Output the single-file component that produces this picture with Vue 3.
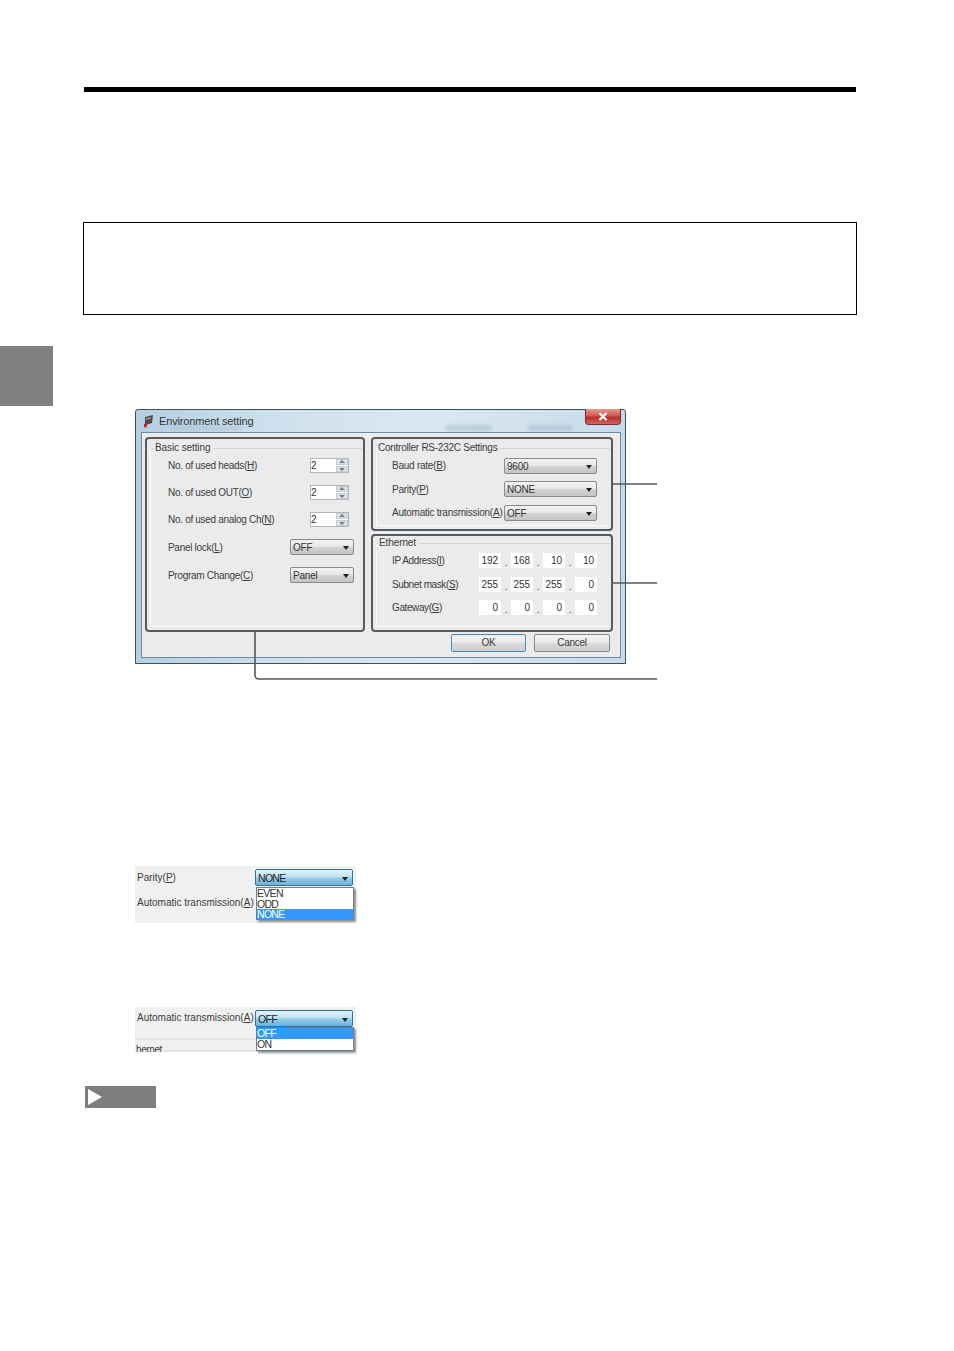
<script setup>
const basicSpins = [
  { pre: 'No. of used heads(', key: 'H', val: '2' },
  { pre: 'No. of used OUT(', key: 'O', val: '2' },
  { pre: 'No. of used analog Ch(', key: 'N', val: '2' },
];
const basicCombos = [
  { pre: 'Panel lock(', key: 'L', val: 'OFF' },
  { pre: 'Program Change(', key: 'C', val: 'Panel' },
];
const serial = [
  { pre: 'Baud rate(', key: 'B', val: '9600' },
  { pre: 'Parity(', key: 'P', val: 'NONE' },
  { pre: 'Automatic transmission(', key: 'A', val: 'OFF' },
];
const ethernet = [
  { pre: 'IP Address(', key: 'I', vals: ['192', '168', '10', '10'] },
  { pre: 'Subnet mask(', key: 'S', vals: ['255', '255', '255', '0'] },
  { pre: 'Gateway(', key: 'G', vals: ['0', '0', '0', '0'] },
];
</script>

<template>
  <div class="page">
    <div class="rule"></div>
    <div class="note"></div>
    <div class="tab"></div>

    <div class="figure">
      <div class="dialog">
        <div class="titlebar">
          <svg class="appicon" width="11" height="13" viewBox="0 0 11 13">
            <path d="M2 2 L10 0 L9 8 L2 10 Z" fill="#4a4a4a" />
            <path d="M3 3 L8 2 L8 4 L3 5 Z" fill="#8f8f8f" />
            <path d="M1 9 L5 8 L3 13 L1 12 Z" fill="#c8242c" />
          </svg>
          <span class="title">Environment setting</span>
          <i class="ghost ghost-a"></i>
          <i class="ghost ghost-b"></i>
          <i class="ghost ghost-c"></i>
          <div class="close">
            <svg width="10" height="9" viewBox="0 0 10 9">
              <path d="M1.5 1 L8.5 8 M8.5 1 L1.5 8" stroke="#fff" stroke-width="2.2" />
            </svg>
          </div>
        </div>

        <div class="client">
          <div class="panels">
            <div class="panel panel-basic">
              <div class="group">
                <div class="legend">Basic setting</div>
                <div class="spin-row" v-for="r in basicSpins" :key="r.key">
                  <span>{{ r.pre }}<u>{{ r.key }}</u>)</span>
                  <div class="spin">
                    <span class="spin-val">{{ r.val }}</span>
                    <div class="spin-btns">
                      <i class="up"></i>
                      <i class="down"></i>
                    </div>
                  </div>
                </div>
                <div class="combo-row" v-for="r in basicCombos" :key="r.key">
                  <span>{{ r.pre }}<u>{{ r.key }}</u>)</span>
                  <div class="combo combo-small">{{ r.val }}<b class="arrow"></b></div>
                </div>
              </div>
            </div>

            <div class="right-col">
              <div class="panel panel-serial">
                <div class="group">
                  <div class="legend">Controller RS-232C Settings</div>
                  <div class="serial-row" v-for="r in serial" :key="r.key">
                    <span>{{ r.pre }}<u>{{ r.key }}</u>)</span>
                    <div class="combo combo-wide">{{ r.val }}<b class="arrow"></b></div>
                  </div>
                </div>
              </div>
              <div class="panel panel-eth">
                <div class="group">
                  <div class="legend">Ethernet</div>
                  <div class="eth-row" v-for="r in ethernet" :key="r.key">
                    <span class="eth-label">{{ r.pre }}<u>{{ r.key }}</u>)</span>
                    <div class="octets">
                      <template v-for="(v, i) in r.vals" :key="i">
                        <span class="octet">{{ v }}</span>
                        <span class="dot" v-if="i < 3">.</span>
                      </template>
                    </div>
                  </div>
                </div>
              </div>
            </div>
          </div>

          <div class="buttons">
            <div class="btn btn-ok">OK</div>
            <div class="btn">Cancel</div>
          </div>
        </div>
      </div>

      <svg class="leaders" width="522" height="271" viewBox="0 0 522 271">
        <path d="M478 75 H522 M478 174 H522 M120 223 V266 Q120 270 124 270 H522" fill="none" stroke="#555a60" stroke-width="1.6" />
      </svg>
    </div>

    <div class="crop crop-parity">
      <div class="crop-row crop-row-first">
        <span>Parity(<u>P</u>)</span>
        <div class="combo-open">NONE<b class="arrow"></b></div>
      </div>
      <div class="crop-row crop-row-second">
        <span>Automatic transmission(<u>A</u>)</span>
      </div>
      <div class="droplist droplist-parity">
        <div>EVEN</div>
        <div>ODD</div>
        <div class="selected">NONE</div>
      </div>
    </div>

    <div class="crop crop-auto">
      <div class="crop-row crop-row-first">
        <span class="crop-label-up">Automatic transmission(<u>A</u>)</span>
        <div class="combo-open">OFF<b class="arrow"></b></div>
      </div>
      <div class="crop-sep"></div>
      <div class="crop-eth">
        <span>hernet</span>
        <i></i>
      </div>
      <div class="droplist droplist-auto">
        <div class="selected">OFF</div>
        <div>ON</div>
      </div>
    </div>

    <div class="note-tag">
      <svg width="14" height="16" viewBox="0 0 14 16">
        <path d="M0 0 L14 8 L0 16 Z" fill="#fff" />
      </svg>
    </div>
  </div>
</template>

<style>
html,
body {
  margin: 0;
  background: #fff;
}
</style>

<style scoped>
.page {
  position: relative;
  width: 954px;
  height: 1351px;
  overflow: hidden;
  background: #fff;
  font-family: "Liberation Sans", Arial, sans-serif;
  font-size: 10px;
  color: #3c3c3c;
}

.rule {
  margin: 87px 0 0 84px;
  width: 772px;
  height: 5px;
  background: #000;
}

.note {
  margin: 130px 0 0 83px;
  width: 774px;
  height: 93px;
  box-sizing: border-box;
  border: 1px solid #000;
}

.tab {
  margin-top: 31px;
  width: 53px;
  height: 60px;
  background: #808080;
}

.figure {
  position: relative;
  margin: 3px 0 0 135px;
  width: 522px;
  height: 271px;
}

.leaders {
  position: absolute;
  left: 0;
  top: 0;
  pointer-events: none;
}

.dialog {
  width: 491px;
  height: 255px;
  box-sizing: border-box;
  border: 1px solid #3d4f5f;
  border-radius: 3px 3px 0 0;
  background: linear-gradient(90deg, #b4cfe1 0%, #cfe1ed 30%, #dbe8f1 60%, #c6dbe9 100%);
  display: flex;
  flex-direction: column;
}

.titlebar {
  height: 22px;
  flex: none;
  display: flex;
  align-items: flex-start;
  position: relative;
}

.appicon {
  margin: 5px 0 0 7px;
}

.title {
  margin: 5px 0 0 5px;
  font-size: 11px;
  letter-spacing: -0.15px;
  color: #333;
}

/* faint blurred shapes showing through the glass frame */
.ghost {
  position: absolute;
  top: 16px;
  height: 4px;
  background: #8ea5b6;
  opacity: 0.55;
  filter: blur(2px);
}

.ghost-a {
  left: 36px;
  width: 70px;
  opacity: 0.3;
}

.ghost-b {
  left: 310px;
  width: 45px;
}

.ghost-c {
  left: 392px;
  width: 44px;
}

.close {
  position: absolute;
  right: 4px;
  top: -1px;
  width: 36px;
  height: 16px;
  box-sizing: border-box;
  border: 1px solid #7d2e2e;
  border-top: none;
  border-radius: 0 0 4px 4px;
  background: linear-gradient(#e59a8e 0%, #d4584c 45%, #b72f28 55%, #d0685e 100%);
  display: flex;
  align-items: center;
  justify-content: center;
}

.client {
  margin: 0 4px 5px 5px;
  flex: 1;
  box-sizing: border-box;
  border: 1px solid #6f8ba1;
  background: #ebebeb;
  padding: 4px 0 0 3px;
}

.panels {
  display: flex;
  gap: 6px;
}

.panel {
  box-sizing: border-box;
  border: 2px solid #555a60;
  border-radius: 4px;
  padding: 9px 1px 3px 3px;
  display: flex;
}

.panel-basic {
  width: 220px;
  height: 195px;
}

.right-col {
  display: flex;
  flex-direction: column;
  gap: 3px;
}

.panel-serial {
  width: 242px;
  height: 94px;
}

.panel-eth {
  width: 242px;
  height: 98px;
  padding-top: 7px;
}

.group {
  flex: 1;
  border-top: 1px solid #d4d4d4;
  border-left: 1px solid #fafafa;
  border-bottom: 1px solid #fafafa;
  min-width: 0;
}

.legend {
  display: table;
  margin: -7px 0 0 3px;
  padding: 0 3px 0 1px;
  height: 12px;
  line-height: 12px;
  background: #ebebeb;
  letter-spacing: -0.1px;
}

.panel-serial .legend {
  margin-left: 0;
  letter-spacing: -0.25px;
}

.panel-eth .legend {
  margin-left: 1px;
  letter-spacing: -0.1px;
}

.spin-row,
.combo-row {
  display: flex;
  align-items: center;
  justify-content: space-between;
  padding-left: 17px;
  letter-spacing: -0.3px;
}

.spin-row {
  height: 27px;
  padding-right: 13px;
}

.panel-basic .legend + .spin-row {
  margin-top: -2px;
}

.combo-row {
  height: 28px;
  padding-right: 8px;
}

.spin {
  width: 39px;
  height: 15px;
  box-sizing: border-box;
  border: 1px solid #b5b8bb;
  background: #fff;
  display: flex;
  justify-content: space-between;
  align-items: center;
  color: #333;
}

.spin-btns {
  width: 12px;
  height: 13px;
  display: flex;
  flex-direction: column;
  gap: 1px;
}

.spin-btns i {
  flex: 1;
  background: #dfe3e8;
  border: 1px solid #c7ccd2;
  position: relative;
}

.up::after,
.down::after {
  content: "";
  position: absolute;
  left: 2px;
  border-left: 3px solid transparent;
  border-right: 3px solid transparent;
}

.up::after {
  top: 0;
  border-bottom: 3px solid #6d7f96;
}

.down::after {
  top: 1px;
  border-top: 3px solid #6d7f96;
}

.combo {
  position: relative;
  flex: none;
  box-sizing: border-box;
  border: 1px solid #8a8a8a;
  border-radius: 2px;
  height: 16px;
  line-height: 15px;
  padding-left: 2px;
  background: linear-gradient(#f2f2f2 0%, #e8e8e8 45%, #d2d2d2 55%, #c4c4c4 100%);
  letter-spacing: -0.2px;
  color: #333;
}

.combo-small {
  width: 64px;
}

.combo-wide {
  width: 93px;
}

.arrow {
  position: absolute;
  right: 4px;
  top: 6px;
  border-left: 3px solid transparent;
  border-right: 3px solid transparent;
  border-top: 4px solid #222;
}

.serial-row {
  display: flex;
  align-items: center;
  justify-content: space-between;
  height: 23.5px;
  padding: 0 13px 0 15px;
  letter-spacing: -0.25px;
  white-space: nowrap;
}

.eth-row {
  display: flex;
  align-items: center;
  height: 23.5px;
  padding-left: 15px;
  letter-spacing: -0.4px;
}

.eth-label {
  width: 87px;
  flex: none;
  white-space: nowrap;
}

.octets {
  display: flex;
  align-items: center;
  letter-spacing: -0.1px;
}

.octet {
  width: 22px;
  height: 15px;
  line-height: 15px;
  background: #fff;
  text-align: right;
  padding-right: 3px;
  box-sizing: border-box;
  color: #333;
}

.dot {
  width: 10px;
  text-align: center;
  line-height: 20px;
  height: 15px;
}

.buttons {
  display: flex;
  justify-content: flex-end;
  gap: 8px;
  margin: 2px 10px 0 0;
}

.btn {
  box-sizing: border-box;
  width: 76px;
  height: 18px;
  line-height: 16px;
  text-align: center;
  border: 1px solid #8a8a8a;
  border-radius: 2px;
  background: linear-gradient(#f2f2f2 0%, #ebebeb 45%, #d8d8d8 55%, #cfcfcf 100%);
  letter-spacing: -0.3px;
}

.btn-ok {
  width: 75px;
  border-color: #3f8dc0;
}

.crop {
  position: relative;
  margin-left: 135px;
  width: 221px;
  background: #f0f0f0;
}

.crop-parity {
  margin-top: 186px;
  height: 57px;
}

.crop-auto {
  margin-top: 84px;
  height: 45px;
}

.crop-row {
  display: flex;
  align-items: center;
  padding-left: 2px;
  white-space: nowrap;
}

.crop-row-first {
  height: 17px;
  padding-top: 3px;
}

.crop-row-second {
  height: 20px;
  margin-top: 6px;
}

.crop-row-first span {
  flex: 1;
}

.crop-label-up {
  margin-top: -2px;
}

.combo-open {
  position: relative;
  flex: none;
  box-sizing: border-box;
  width: 98px;
  height: 17px;
  margin-right: 3px;
  line-height: 16px;
  padding-left: 2px;
  font-size: 10.5px;
  letter-spacing: -0.7px;
  border: 1px solid #2f6f9e;
  border-radius: 2px;
  background: linear-gradient(#e4f3fb 0%, #bfe0f3 45%, #94cdea 55%, #6fb2d8 100%);
  color: #222;
}

.combo-open .arrow {
  top: 7px;
}

.droplist {
  position: absolute;
  left: 121px;
  width: 98px;
  box-sizing: border-box;
  border: 1px solid #6f7f8f;
  background: #fff;
  box-shadow: 2px 2px 2px rgba(0, 0, 0, 0.4);
  font-size: 10.5px;
  letter-spacing: -0.7px;
  line-height: 10.5px;
  color: #333;
}

.droplist div {
  height: 10.5px;
}

.droplist .selected {
  background: #3399ff;
  color: #fff;
}

.droplist-parity {
  top: 21px;
  height: 33px;
}

.droplist-auto {
  top: 20px;
  height: 24px;
}

.crop-sep {
  position: absolute;
  left: 0;
  right: 0;
  top: 31px;
  height: 2px;
  background: #dfe4e8;
}

.crop-eth {
  position: absolute;
  left: 0;
  right: 0;
  top: 38px;
  height: 7px;
  overflow: hidden;
  display: flex;
  align-items: flex-start;
  background: #f0f0f0;
  line-height: 10px;
  letter-spacing: -0.4px;
}

.crop-eth span {
  padding-left: 1px;
}

.crop-eth i {
  flex: 1;
  height: 2px;
  margin: 5px 0 0 3px;
  background: #dfe4e8;
}

.note-tag {
  margin: 34px 0 0 85px;
  width: 71px;
  height: 22px;
  background: #7f7d7d;
  display: flex;
  align-items: center;
  padding-left: 3px;
  box-sizing: border-box;
}
</style>
